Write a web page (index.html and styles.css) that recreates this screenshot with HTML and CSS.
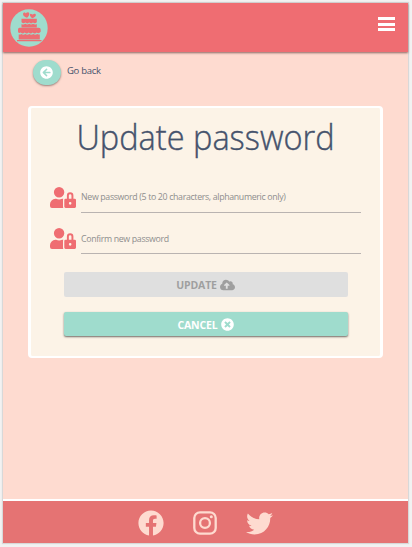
FILE: index.html
```html
<!DOCTYPE html>
<html lang="en">
<head>
<meta charset="utf-8">
<title>Update password</title>
<link rel="stylesheet" href="styles.css">
</head>
<body>
<svg class="defs" aria-hidden="true">
  <symbol id="user-lock" viewBox="0 0 640 512"><path d="M224 256A128 128 0 1 0 96 128a128 128 0 0 0 128 128zm96 64a63.080 63.080 0 0 1 8.100-30.500c-4.800-.5-9.500-1.500-14.500-1.500h-16.700a174.080 174.080 0 0 1-145.800 0h-16.700A134.430 134.430 0 0 0 0 422.400V464a48 48 0 0 0 48 48h280.900a63.540 63.540 0 0 1-8.900-32zm288-32h-32v-80a80 80 0 0 0-160 0v80h-32a32 32 0 0 0-32 32v160a32 32 0 0 0 32 32h224a32 32 0 0 0 32-32V320a32 32 0 0 0-32-32zM496 432a32 32 0 1 1 32-32 32 32 0 0 1-32 32zm32-144h-64v-80a32 32 0 0 1 64 0z"/></symbol>
</svg>
<div class="app">
  <header class="header">
    <svg class="logo" viewBox="0 0 38 38">
      <circle cx="19" cy="19" r="18.700" fill="#9fdccd"/>
      <g fill="#ed6e73">
        <path d="M17 8.800C13 7.500 12.200 4.500 13.700 3.700c1.200-.4 2.200.7 2.200.7s1.200-1.800 2.700-1c1.500 1 .4 3.600-1.600 5.400z"/>
        <path d="M22.500 9.200C19.800 7.800 19.300 5.300 20.700 4.700c1 0 1.900.9 1.900.9s1.400-1.300 2.800-.6c1.300 1-.2 3.300-2.900 4.200z"/>
        <path d="M11.500 9.700h15.300v3.500q-1.900 2-3.800.4-1.900 1.600-3.800 0-1.900 1.600-3.900 0-1.900 1.600-3.800-.4z"/>
        <path d="M11.500 15q1.900 1.100 3.800-.2 2 1.300 3.900 0 1.900 1.300 3.800 0 1.900 1.300 3.800.2v3.500H11.500z"/>
        <path d="M9.500 18.800h19.200q2 0 2 2v2q-1.800 2.300-4 .8-2 1.800-4 0-2 1.800-4 0-2 1.800-4 0-2 1.800-4 0-2.300 1-2.700-1.200v-1.600q0-2 1.500-2z"/>
        <path d="M8.700 25.500q1.500.4 2.600-.5 2 1.600 4 0 2 1.600 4 0 2 1.600 4 0 2 1.600 4 0 1.200.8 2.500.5v5H8.700zM7 31h24.500v1.200H7z"/>
      </g>
    </svg>
    <svg class="menu" viewBox="0 0 17 15"><path d="M0 0h17v3H0zM0 6h17v3H0zM0 11h17v3H0z"/></svg>
  </header>
  <main class="main">
    <div class="back">
      <a class="back-button"><svg viewBox="0 0 512 512"><path d="M256 504C119 504 8 393 8 256S119 8 256 8s248 111 248 248-111 248-248 248zm28.900-143.600L209.400 288H392c13.300 0 24-10.700 24-24v-16c0-13.300-10.700-24-24-24H209.400l75.500-72.400c9.700-9.300 9.900-24.800.4-34.300l-11-10.900c-9.400-9.400-24.600-9.400-33.900 0L107.700 239c-9.400 9.400-9.400 24.600 0 33.900l132.700 132.700c9.400 9.400 24.600 9.400 33.900 0l11-10.900c9.500-9.500 9.300-25-.4-34.300z"/></svg></a>
      <span class="back-text">Go back</span>
    </div>
    <section class="card">
      <h1 class="title">Update password</h1>
      <label class="field"><svg class="lock"><use href="#user-lock"/></svg><span class="input"><span class="hint">New password (5 to 20 characters, alphanumeric only)</span></span></label>
      <label class="field second"><svg class="lock"><use href="#user-lock"/></svg><span class="input"><span class="hint">Confirm new password</span></span></label>
      <button class="button disabled"><span>UPDATE</span><svg class="cloud" viewBox="0 0 640 512"><path d="M537.600 226.600c4.100-10.700 6.400-22.400 6.400-34.600 0-53-43-96-96-96-19.700 0-38.100 6-53.300 16.200C367 64.200 315.300 32 256 32c-88.400 0-160 71.600-160 160 0 2.700.1 5.400.2 8.100C40.200 219.800 0 273.200 0 336c0 79.500 64.500 144 144 144h368c70.700 0 128-57.300 128-128 0-61.900-44-113.600-102.400-125.400zM393.400 288H328v112c0 8.800-7.200 16-16 16h-48c-8.800 0-16-7.200-16-16V288h-65.400c-14.300 0-21.400-17.200-11.300-27.300l105.400-105.400c6.200-6.200 16.400-6.200 22.600 0l105.400 105.400c10.100 10.100 2.900 27.300-11.300 27.300z"/></svg></button>
      <button class="button cancel"><span>CANCEL</span><svg class="cross" viewBox="0 0 512 512"><path d="M256 8C119 8 8 119 8 256s111 248 248 248 248-111 248-248S393 8 256 8zm121.600 313.100c4.700 4.700 4.700 12.300 0 17L338 377.600c-4.700 4.700-12.300 4.700-17 0L256 312l-65.100 65.600c-4.700 4.700-12.300 4.700-17 0L134.400 338c-4.700-4.700-4.700-12.300 0-17l65.600-65-65.600-65.100c-4.700-4.700-4.700-12.300 0-17l39.600-39.600c4.700-4.700 12.300-4.700 17 0l65 65.700 65.100-65.600c4.700-4.700 12.300-4.700 17 0l39.600 39.600c4.700 4.700 4.700 12.300 0 17L312 256z"/></svg></button>
    </section>
  </main>
  <footer class="footer">
    <svg class="facebook" viewBox="0 0 512 512"><path d="M504 256C504 119 393 8 256 8S8 119 8 256c0 123.780 90.690 226.380 209.250 245V327.690h-63V256h63v-54.640c0-62.150 37-96.480 93.670-96.480 27.140 0 55.520 4.840 55.520 4.840v61h-31.280c-30.800 0-40.410 19.120-40.410 38.730V256h68.780l-11 71.690h-57.780V501C413.310 482.380 504 379.780 504 256z"/></svg>
    <svg class="instagram" viewBox="0 0 24 24"><rect x="1.300" y="1.300" width="21.400" height="21.400" rx="5.700" fill="none" stroke="currentColor" stroke-width="2.300"/><circle cx="12" cy="12" r="4.900" fill="none" stroke="currentColor" stroke-width="2.300"/><circle cx="18.300" cy="5.700" r="1.500"/></svg>
    <svg class="twitter" viewBox="0 0 512 512"><path d="M459.370 151.716c.325 4.548.325 9.097.325 13.645 0 138.720-105.583 298.558-298.558 298.558-59.452 0-114.680-17.219-161.137-47.106 8.447.974 16.568 1.299 25.340 1.299 49.055 0 94.213-16.568 130.274-44.832-46.132-.975-84.792-31.188-98.112-72.772 6.498.974 12.995 1.624 19.818 1.624 9.421 0 18.843-1.300 27.614-3.573-48.081-9.747-84.143-51.980-84.143-102.985v-1.299c13.969 7.797 30.214 12.670 47.431 13.319-28.264-18.843-46.781-51.005-46.781-87.391 0-19.492 5.197-37.360 14.294-52.954 51.655 63.675 129.300 105.258 216.365 109.807-1.624-7.797-2.599-15.918-2.599-24.040 0-57.828 46.782-104.934 104.934-104.934 30.213 0 57.502 12.670 76.670 33.137 23.715-4.548 46.456-13.320 66.599-25.340-7.798 24.366-24.366 44.833-46.132 57.827 21.117-2.273 41.584-8.122 60.426-16.243-14.292 20.791-32.161 39.308-52.628 54.253z"/></svg>
  </footer>
</div>
</body>
</html>
```

FILE: styles.css
```css
* { box-sizing: border-box; }
body {
  margin: 0;
  height: 547px;
  padding: 3px 4px 4px 3px;
  background: #f2f2f2;
  font-family: "Open Sans", "Noto Sans", sans-serif;
  color: #45526c;
  overflow: hidden;
}
svg { display: block; flex: none; fill: currentColor; }
.defs { position: absolute; width: 0; height: 0; }
.app {
  height: 540px;
  display: flex;
  flex-direction: column;
  background: #fedbd0;
  box-shadow: 0 0 1px 1px #d8d8d8;
}
.header {
  height: 49px;
  flex: none;
  display: flex;
  justify-content: space-between;
  align-items: flex-start;
  padding: 6px 13px 0 7px;
  background: #ef6d72;
  box-shadow: 0 1px 2px rgba(80, 40, 40, .65);
}
.logo { width: 38px; height: 38px; }
.menu { width: 17px; height: 15px; margin-top: 8px; color: #fff; }
.main { flex: 1; padding: 8px 25px 0; }
.back { display: flex; align-items: flex-start; padding-left: 5px; height: 46px; }
.back-button {
  width: 28px;
  height: 25px;
  border-radius: 13px;
  display: flex;
  align-items: center;
  justify-content: center;
  background: #9fdccd;
  color: #fff;
  box-shadow: 0 1px 2px rgba(60, 40, 40, .5);
}
.back-button svg { width: 13px; height: 13px; margin-right: 1px; }
.back-text { margin-left: 6px; margin-top: 4px; font-size: 9.5px; line-height: 14px; letter-spacing: -.3px; }
.card {
  width: 355px;
  height: 252px;
  border: 3px solid #fff;
  border-width: 2.500px 3px;
  border-radius: 4px;
  background: #fcf3e7;
  padding: 0 19px;
}
.title {
  margin: 0;
  height: 71px;
  padding-top: 5px;
  font-size: 35px;
  line-height: 48px;
  font-weight: 300;
  text-align: center;
  white-space: nowrap;
  transform: scaleX(.93);
  -webkit-text-stroke: .4px currentColor;
}
.field { display: flex; height: 34px; gap: 5px; }
.lock { width: 26px; height: 21px; margin-top: 8px; color: #ef6d72; }
.input { flex: none; width: 280px; height: 34px; border-bottom: 1px solid #b9b3b1; font-size: 8.800px; letter-spacing: -.34px; line-height: 14px; padding-top: 11px; color: #8e8e8e; }
.second { margin-top: 7px; }
.second .input { padding-top: 12px; }
.button {
  width: 284px;
  height: 25px;
  margin: 18px 0 0 13.500px;
  border: 0;
  border-radius: 2px;
  display: flex;
  justify-content: center;
  align-items: center;
  gap: 3px;
  font: 700 10.500px/24px "Open Sans", sans-serif;
  letter-spacing: -.15px;
  padding: 0;
}
.disabled { background: #dfdfdf; color: #9f9f9f; }
.cancel { margin-top: 15px; height: 24px; background: #9fdccd; color: #fff; box-shadow: 0 1px 2px rgba(40, 30, 30, .65); }
.cancel span { padding-top: 1px; }
.cloud { width: 15px; height: 12px; }
.cross { width: 13px; height: 13px; }
.footer {
  height: 44px;
  flex: none;
  display: flex;
  align-items: center;
  padding-left: 135px;
  border-top: 2px solid #fff;
  background: #e57373;
  color: #fedbd0;
}
.facebook { width: 26px; height: 26px; margin-top: 2px; }
.instagram { width: 24px; height: 24px; margin: 2px 0 0 29px; }
.twitter { width: 27px; height: 27px; margin: 2px 0 0 29px; }
```
